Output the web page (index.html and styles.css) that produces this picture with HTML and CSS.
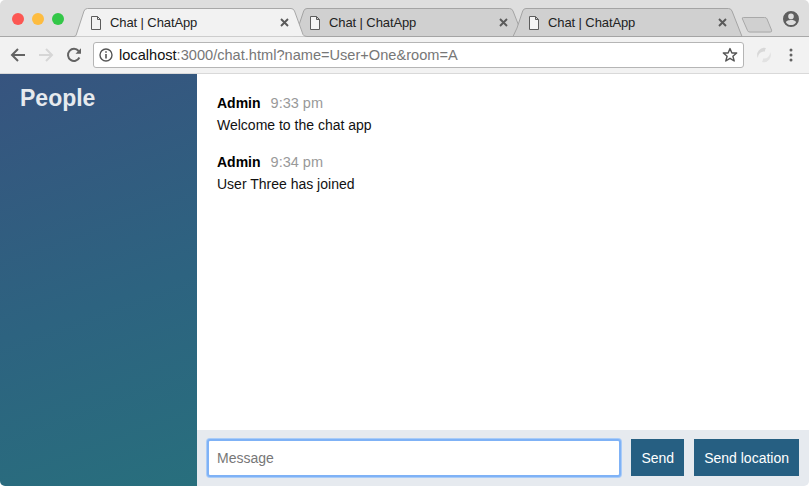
FILE: index.html
```html
<!DOCTYPE html>
<html lang="en">
<head>
<meta charset="utf-8">
<title>Chat | ChatApp</title>
<link rel="stylesheet" href="styles.css">
</head>
<body>
<div class="window">
  <header class="tabstrip">
    <div class="lights">
      <span class="light red"></span>
      <span class="light yellow"></span>
      <span class="light green"></span>
    </div>
    <div class="tabs">
      <div class="tab active">
        <svg class="tab-shape" viewBox="0 0 237 29" preserveAspectRatio="none"><path d="M0 28.5H2Q3.5 28.5 4.2 27L12 3Q13 .5 15.5 .5H219Q221.5 .5 222.5 3L231 26.5Q232 28.5 235 28.5" fill="#f2f2f2" stroke="#a8a8a8"/></svg>
        <svg class="page-icon" viewBox="0 0 12 14"><path d="M1.5.5H7.5L10.5 3.5V13.5H1.5ZM7.5.5V3.5H10.5" fill="none" stroke="#5c5c5c"/></svg>
        <span class="tab-title">Chat | ChatApp</span>
        <svg class="tab-close" viewBox="0 0 9 9"><path d="M1 1L8 8M8 1L1 8" stroke="#5a5a5a" stroke-width="1.9"/></svg>
      </div>
      <div class="tab">
        <svg class="tab-shape" viewBox="0 0 237 29" preserveAspectRatio="none"><path d="M3 28.5H232L222 3Q221 .5 218.5 .5H16Q13.5 .5 12.7 3L7 20Z" fill="#d0d0d0" stroke="#a4a4a4"/></svg>
        <svg class="page-icon" viewBox="0 0 12 14"><path d="M1.5.5H7.5L10.5 3.5V13.5H1.5ZM7.5.5V3.5H10.5" fill="#f4f4f4" stroke="#5c5c5c"/></svg>
        <span class="tab-title">Chat | ChatApp</span>
        <svg class="tab-close" viewBox="0 0 9 9"><path d="M1 1L8 8M8 1L1 8" stroke="#5a5a5a" stroke-width="1.9"/></svg>
      </div>
      <div class="tab">
        <svg class="tab-shape" viewBox="0 0 237 29" preserveAspectRatio="none"><path d="M3 28.5H232L222 3Q221 .5 218.5 .5H16Q13.5 .5 12.7 3L7 20Z" fill="#d0d0d0" stroke="#a4a4a4"/></svg>
        <svg class="page-icon" viewBox="0 0 12 14"><path d="M1.5.5H7.5L10.5 3.5V13.5H1.5ZM7.5.5V3.5H10.5" fill="#f4f4f4" stroke="#5c5c5c"/></svg>
        <span class="tab-title">Chat | ChatApp</span>
        <svg class="tab-close" viewBox="0 0 9 9"><path d="M1 1L8 8M8 1L1 8" stroke="#5a5a5a" stroke-width="1.9"/></svg>
      </div>
      <svg class="new-tab" viewBox="0 0 34 17"><path d="M2.5 .5H25Q27 .5 27.6 2L32.5 14Q33 16 31 16H9.5Q7.5 16 7 14.5L1.5 2Q1 .5 2.5 .5Z" fill="#d0d0d0" stroke="#a4a4a4"/></svg>
    </div>
    <svg class="profile" viewBox="0 0 16 16"><path d="M8 0A8 8 0 1 0 8 16A8 8 0 1 0 8 0ZM8 2.6A2.8 2.8 0 1 1 8 8.2A2.8 2.8 0 1 1 8 2.6ZM8 14C5.9 14 4 13 3 11.4C3 9.9 6 9.1 8 9.1S13 9.9 13 11.4C12 13 10.1 14 8 14Z" fill="#5f5f5f" fill-rule="evenodd"/></svg>
  </header>

  <nav class="toolbar">
    <svg class="nav-icon" viewBox="0 0 16 16"><path d="M15 8H2M8 2L2 8L8 14" fill="none" stroke="#636363" stroke-width="2"/></svg>
    <svg class="nav-icon" viewBox="0 0 16 16"><path d="M1 8H14M8 2L14 8L8 14" fill="none" stroke="#d6d6d6" stroke-width="2"/></svg>
    <svg class="nav-icon" viewBox="0 0 16 16"><path d="M13.4 10.5A6 6 0 1 1 12.6 4" fill="none" stroke="#636363" stroke-width="2"/><path d="M9.5 6.8H15V1.3Z" fill="#636363"/></svg>
    <div class="omnibox">
      <svg class="info" viewBox="0 0 14 14"><circle cx="7" cy="7" r="6" fill="none" stroke="#555" stroke-width="1.4"/><path d="M7 6V10.5M7 3.2V4.8" stroke="#555" stroke-width="1.6"/></svg>
      <span class="url"><span class="host">localhost</span>:3000/chat.html?name=User+One&amp;room=A</span>
      <svg class="star" viewBox="0 0 16 16"><path d="M8 1.6L9.9 6H14.7L10.9 9.2L12.2 14L8 11.3L3.8 14L5.1 9.2L1.3 6H6.1Z" fill="none" stroke="#555" stroke-width="1.4" stroke-linejoin="round"/></svg>
    </div>
    <svg class="extension" viewBox="0 0 16 16"><path d="M10 1A7 7 0 0 0 2 11A6 6 0 0 1 9 4.5A5 5 0 0 1 10 1Z" fill="#d8d8d8"/><path d="M6 15A7 7 0 0 0 14 5A6 6 0 0 1 7 11.5A5 5 0 0 1 6 15Z" fill="#e2e2e2"/></svg>
    <svg class="menu-icon" viewBox="0 0 4 14"><circle cx="2" cy="2" r="1.5" fill="#636363"/><circle cx="2" cy="7" r="1.5" fill="#636363"/><circle cx="2" cy="12" r="1.5" fill="#636363"/></svg>
  </nav>

  <main class="chat">
    <aside class="sidebar">
      <h3 class="people">People</h3>
    </aside>
    <section class="main">
      <ol class="messages">
        <li class="message">
          <div class="message-head"><strong class="name">Admin</strong><span class="time">9:33 pm</span></div>
          <p class="body-text">Welcome to the chat app</p>
        </li>
        <li class="message">
          <div class="message-head"><strong class="name">Admin</strong><span class="time">9:34 pm</span></div>
          <p class="body-text">User Three has joined</p>
        </li>
      </ol>
      <footer class="composer">
        <input class="message-input" type="text" placeholder="Message">
        <button class="btn" type="button">Send</button>
        <button class="btn" type="button">Send location</button>
      </footer>
    </section>
  </main>
</div>
</body>
</html>
```

FILE: styles.css
```css
* { box-sizing: border-box; }
html, body { margin: 0; height: 100%; background: #fff; overflow: hidden; }
body { font-family: "Liberation Sans", Arial, sans-serif; }

.window {
  height: 486px;
  display: flex;
  flex-direction: column;
  border-radius: 5px;
  overflow: hidden;
}

.tabstrip {
  height: 37px;
  flex: none;
  background: #dedede;
  display: flex;
  align-items: flex-start;
  border-bottom: 1px solid #a8a8a8;
  position: relative;
}
.lights { display: flex; gap: 8px; padding: 13px 0 0 12px; width: 72px; flex: none; }
.light { width: 12px; height: 12px; border-radius: 50%; }
.red { background: #fc5753; }
.yellow { background: #fdbc40; }
.green { background: #33c748; }

.tabs { display: flex; padding-top: 8px; height: 37px; position: relative; }
.tab {
  position: relative;
  width: 237px;
  height: 29px;
  margin-right: -18px;
  display: flex;
  align-items: center;
  padding: 0 20px 0 18px;
  font-size: 13px;
  color: #222;
}
.tab.active { z-index: 2; }
.tab-shape { position: absolute; inset: 0; width: 100%; height: 100%; }
.page-icon { position: relative; width: 12px; height: 14px; margin-right: 8px; flex: none; }
.tab-title { position: relative; flex: 1; letter-spacing: -.1px; }
.tab-close { position: relative; width: 9px; height: 9px; flex: none; }
.new-tab { width: 34px; height: 16px; margin: 9px 0 0 11px; flex: none; }
.profile { position: absolute; right: 10px; top: 11px; width: 16px; height: 16px; }

.toolbar {
  height: 37px;
  flex: none;
  background: #f2f2f2;
  border-bottom: 1px solid #d9d9d9;
  display: flex;
  align-items: center;
  padding-left: 10px;
}
.nav-icon { width: 16px; height: 16px; margin-right: 12px; flex: none; }
.omnibox {
  width: 651px;
  height: 26px;
  margin-left: -1px;
  background: #fff;
  border: 1px solid #b5b5b5;
  border-radius: 3px;
  display: flex;
  align-items: center;
  padding: 0 5px;
  font-size: 14.6px;
  color: #777;
}
.info { width: 14px; height: 14px; margin-right: 6px; flex: none; }
.url { flex: 1; }
.host { color: #111; }
.star { width: 16px; height: 16px; flex: none; }
.extension { width: 16px; height: 16px; margin-left: 12px; flex: none; }
.menu-icon { width: 4px; height: 14px; margin-left: 17px; flex: none; }

.chat { flex: 1; display: flex; min-height: 0; }
.sidebar {
  width: 197px;
  flex: none;
  background: linear-gradient(160deg, #37547f 0%, #2d6380 55%, #286f7d 100%);
  padding: 11px 20px;
}
.people {
  margin: 0;
  font-size: 23px;
  line-height: 26px;
  font-weight: 700;
  color: #e6eaee;
}
.main { flex: 1; display: flex; flex-direction: column; min-width: 0; }
.messages { flex: 1; list-style: none; margin: 0; padding: 21px 20px 0; }
.message { margin-bottom: 19px; }
.message-head { display: flex; align-items: baseline; height: 19px; margin-bottom: 1px; }
.name { font-size: 14px; font-weight: 700; color: #000; margin-right: 10px; }
.time { font-size: 14.5px; color: #999; }
.body-text { margin: 0; font-size: 14px; line-height: 20px; color: #111; }

.composer {
  height: 56px;
  flex: none;
  background: #e6eaef;
  display: flex;
  align-items: center;
  gap: 10px;
  padding: 0 10px 1px;
}
.message-input {
  flex: 1;
  min-width: 0;
  height: 38px;
  border: 2px solid #7fb2f6;
  border-radius: 3px;
  box-shadow: 0 0 0 1px #a9ccf8;
  background: #fff;
  padding: 0 8px;
  font: 14px "Liberation Sans", Arial, sans-serif;
  outline: none;
}
.message-input::placeholder { color: #777; opacity: 1; }
.btn {
  height: 37px;
  padding: 0 10px;
  border: 0;
  background: #265f82;
  color: #fff;
  font: 14px "Liberation Sans", Arial, sans-serif;
}
```
